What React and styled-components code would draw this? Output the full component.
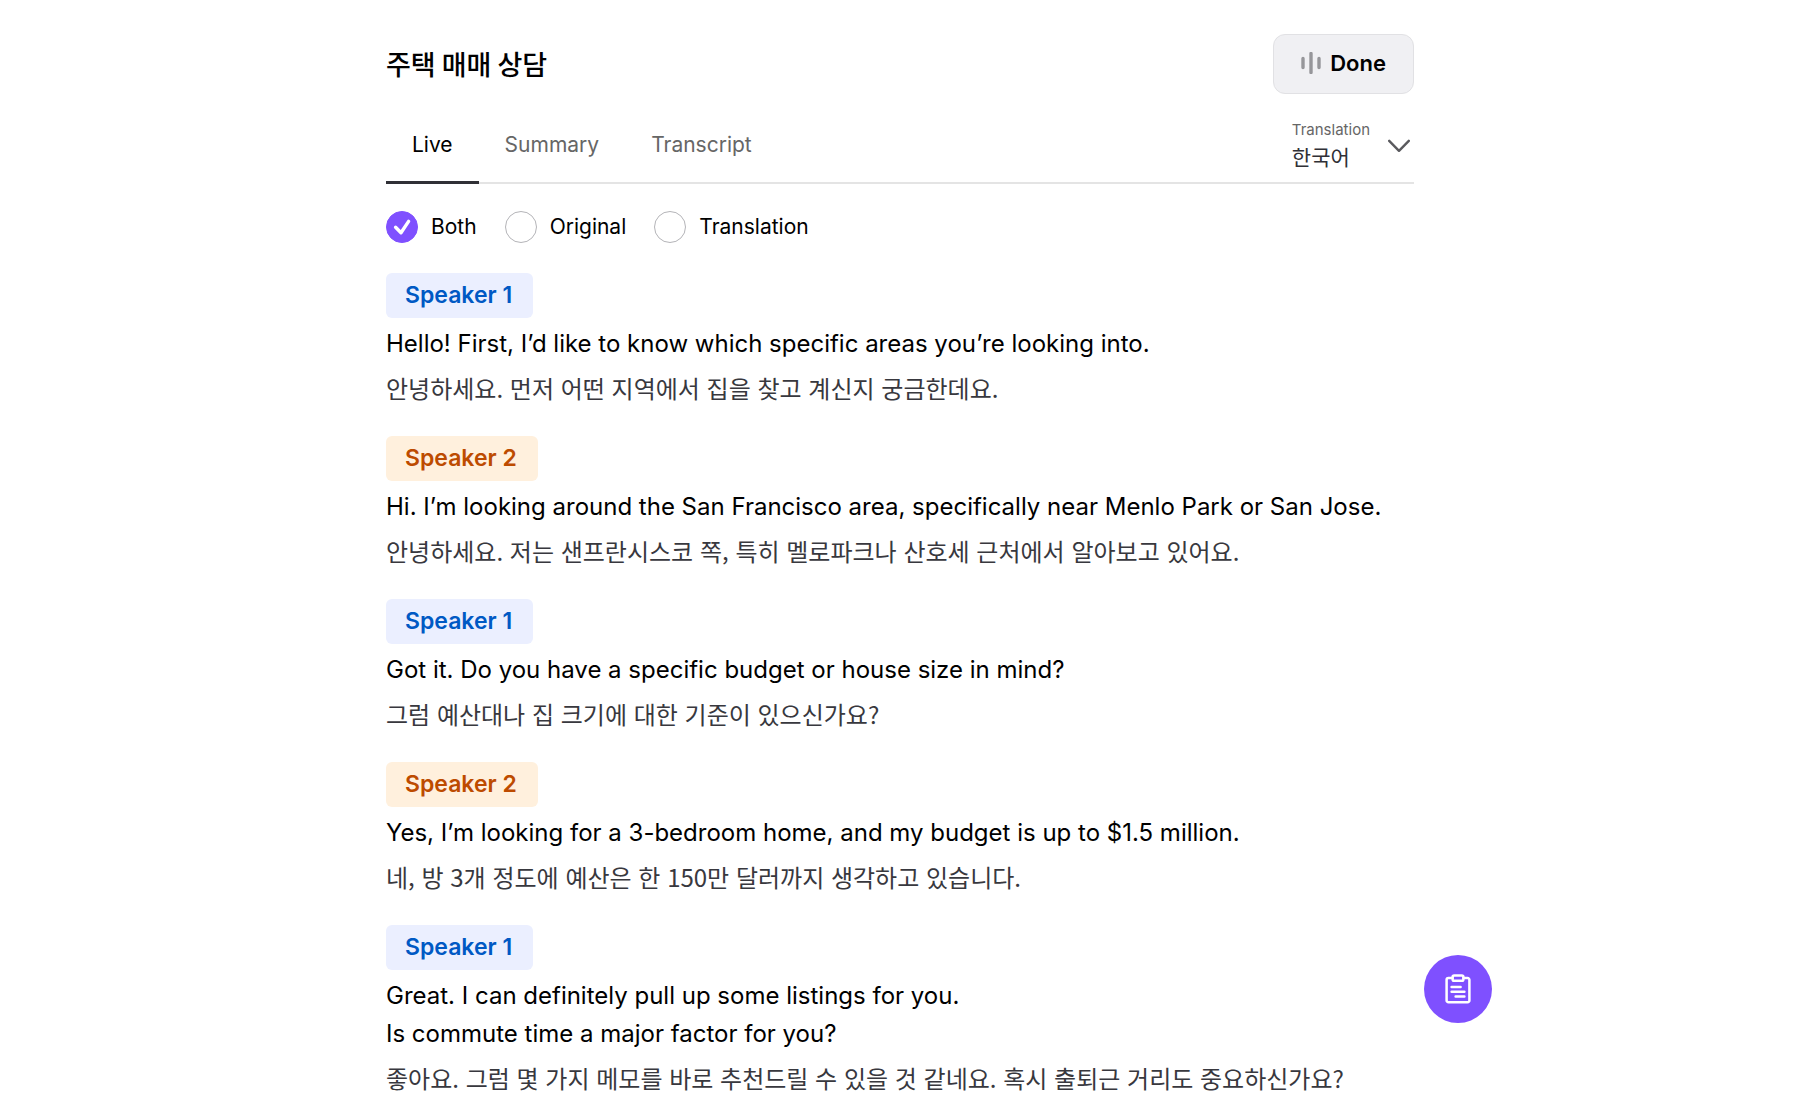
import { useState } from 'react';
import styled, { createGlobalStyle } from 'styled-components';

const PURPLE = '#7f50ff';

const GlobalStyle = createGlobalStyle`
	* {
		box-sizing: border-box;
	}

	body {
		margin: 0;
		background: #fff;
		color: #000;
		font-family: Inter, 'Noto Sans CJK KR', sans-serif;
	}

	button,
	select {
		margin: 0;
		border: 0;
		background: none;
		color: inherit;
		font-family: inherit;
		cursor: pointer;
	}
`;

const SPage = styled.main`
	max-width: 1076px;
	margin: 0 auto;
	padding: 34px 24px 20px;
`;

const SHeader = styled.header`
	display: flex;
	align-items: center;
	justify-content: space-between;
`;

const STitle = styled.h1`
	margin: 0;
	font-family: 'Noto Sans CJK KR', sans-serif;
	font-weight: 500;
	font-size: 27px;
	line-height: 40px;
`;

const SDoneButton = styled.button`
	display: flex;
	align-items: center;
	gap: 9px;
	height: 60px;
	padding: 0 27px 2px;
	border: 1px solid #e1e1e4;
	border-radius: 12px;
	background: #f0f0f3;
	font-weight: 600;
	font-size: 22px;
`;

const SToolbar = styled.div`
	display: flex;
	align-items: stretch;
	justify-content: space-between;
	height: 90px;
	box-shadow: inset 0 -2px #e4e4e4;
`;

const STabs = styled.div`
	display: flex;
`;

const STab = styled.button`
	padding: 14px 26px 0;
	border-bottom: 3px solid ${({ $active }) => ($active ? '#303036' : 'transparent')};
	color: ${({ $active }) => ($active ? '#000' : '#666')};
	font-size: 21px;
	line-height: 24px;
`;

const SLanguage = styled.div`
	display: flex;
	align-items: center;
	gap: 18px;
	padding: 14px 4px 0 0;
`;

const SLanguageField = styled.div`
	display: flex;
	flex-direction: column;
`;

const SLanguageLabel = styled.label`
	color: #666;
	font-size: 15px;
	line-height: 20px;
`;

const SLanguageSelect = styled.select`
	width: 100%;
	height: 32px;
	padding: 0;
	appearance: none;
	color: #303036;
	font-family: 'Noto Sans CJK KR', sans-serif;
	font-size: 21px;
	line-height: 32px;
`;

const SFilters = styled.div`
	display: flex;
	gap: 28px;
	padding: 26px 0 30px;
`;

const SFilter = styled.label`
	display: flex;
	align-items: center;
	gap: 13px;
	font-size: 21px;
	line-height: 33px;
	cursor: pointer;
`;

const SRadioBox = styled.span`
	display: grid;

	> * {
		grid-area: 1 / 1;
	}

	svg {
		pointer-events: none;
	}
`;

const SRadio = styled.input`
	width: 32px;
	height: 32px;
	margin: 0;
	appearance: none;
	border: 1px solid #b4b4b8;
	border-radius: 50%;

	&:checked {
		border-color: ${PURPLE};
		background: ${PURPLE};
	}
`;

const SConversation = styled.section`
	display: flex;
	flex-direction: column;
	gap: 30px;
`;

const SMessage = styled.article`
	display: flex;
	flex-direction: column;
	align-items: flex-start;
	gap: 7px;
`;

const badgeColors = {
	1: { text: '#0059c4', background: '#ebefff' },
	2: { text: '#bd4b00', background: '#fff0dd' },
};

const SBadge = styled.span`
	padding: 0 21px 0 19px;
	border-radius: 6px;
	background: ${({ $speaker }) => badgeColors[$speaker].background};
	color: ${({ $speaker }) => badgeColors[$speaker].text};
	font-weight: 600;
	font-size: 23px;
	line-height: 45px;
`;

const SOriginal = styled.p`
	margin: 0;
	font-size: 24px;
	line-height: 38px;
	white-space: pre-line;
`;

const STranslation = styled.p`
	margin: 0;
	color: #38383e;
	font-family: 'Noto Sans CJK KR', sans-serif;
	font-weight: 400;
	font-size: 24px;
	line-height: 36px;
`;

const SNotesButton = styled.button`
	position: fixed;
	bottom: 97px;
	left: min(calc(50% + 524px), calc(100% - 92px));
	display: flex;
	align-items: center;
	justify-content: center;
	width: 68px;
	height: 68px;
	padding: 0;
	border-radius: 50%;
	background: ${PURPLE};
`;

const WaveIcon = () => (
	<svg width="20" height="22" viewBox="0 0 20 22" fill="none" aria-hidden="true">
		<path
			d="M2 6.5V15.5M10 1.5V20.5M18 6.5V15.5"
			stroke="#96969a"
			strokeWidth="3.4"
			strokeLinecap="round"
		/>
	</svg>
);

const ChevronIcon = () => (
	<svg width="22" height="14" viewBox="0 0 22 14" fill="none" aria-hidden="true">
		<path
			d="M1.2 1.8L11 11.8L20.8 1.8"
			stroke="#5a5a5e"
			strokeWidth="2.4"
			strokeLinecap="round"
			strokeLinejoin="round"
		/>
	</svg>
);

const CheckIcon = () => (
	<svg width="32" height="32" viewBox="0 0 32 32" fill="none" aria-hidden="true">
		<path
			d="M9.6 16.2L15 21.8L22.6 10.4"
			stroke="#fff"
			strokeWidth="3.4"
			strokeLinecap="round"
			strokeLinejoin="round"
		/>
	</svg>
);

const ClipboardIcon = () => (
	<svg width="26" height="30" viewBox="0 0 26 30" fill="none" aria-hidden="true">
		<g stroke="#fff" strokeWidth="2.5" strokeLinecap="round" strokeLinejoin="round">
			<path d="M7.5 4H3.4A1.8 1.8 0 0 0 1.6 5.8V26.4A1.8 1.8 0 0 0 3.4 28.2H22.6A1.8 1.8 0 0 0 24.4 26.4V5.8A1.8 1.8 0 0 0 22.6 4H18.5" />
			<rect x="7.6" y="1.4" width="10.8" height="5.4" rx="1.6" />
			<path d="M6.6 13H15.6M6.6 17.7H19.4M10.6 22.4H19.4" />
		</g>
	</svg>
);

const tabs = ['Live', 'Summary', 'Transcript'];

const filters = ['Both', 'Original', 'Translation'];

const messages = [
	{
		speaker: 1,
		original: 'Hello! First, I’d like to know which specific areas you’re looking into.',
		translation: '안녕하세요. 먼저 어떤 지역에서 집을 찾고 계신지 궁금한데요.',
	},
	{
		speaker: 2,
		original:
			'Hi. I’m looking around the San Francisco area, specifically near Menlo Park or San Jose.',
		translation:
			'안녕하세요. 저는 샌프란시스코 쪽, 특히 멜로파크나 산호세 근처에서 알아보고 있어요.',
	},
	{
		speaker: 1,
		original: 'Got it. Do you have a specific budget or house size in mind?',
		translation: '그럼 예산대나 집 크기에 대한 기준이 있으신가요?',
	},
	{
		speaker: 2,
		original: 'Yes, I’m looking for a 3-bedroom home, and my budget is up to $1.5 million.',
		translation: '네, 방 3개 정도에 예산은 한 150만 달러까지 생각하고 있습니다.',
	},
	{
		speaker: 1,
		original:
			'Great. I can definitely pull up some listings for you.\nIs commute time a major factor for you?',
		translation:
			'좋아요. 그럼 몇 가지 메모를 바로 추천드릴 수 있을 것 같네요. 혹시 출퇴근 거리도 중요하신가요?',
	},
];

const App = () => {
	const [activeTab, setActiveTab] = useState('Live');
	const [filter, setFilter] = useState('Both');

	return (
		<>
			<GlobalStyle />
			<SPage>
				<SHeader>
					<STitle>주택 매매 상담</STitle>
					<SDoneButton type="button">
						<WaveIcon />
						Done
					</SDoneButton>
				</SHeader>
				<SToolbar>
					<STabs role="tablist">
						{tabs.map((tab) => (
							<STab
								key={tab}
								type="button"
								role="tab"
								aria-selected={tab === activeTab}
								$active={tab === activeTab}
								onClick={() => setActiveTab(tab)}
							>
								{tab}
							</STab>
						))}
					</STabs>
					<SLanguage>
						<SLanguageField>
							<SLanguageLabel htmlFor="language">Translation</SLanguageLabel>
							<SLanguageSelect id="language" defaultValue="ko">
								<option value="ko">한국어</option>
							</SLanguageSelect>
						</SLanguageField>
						<ChevronIcon />
					</SLanguage>
				</SToolbar>
				<SFilters role="radiogroup" aria-label="Text shown">
					{filters.map((name) => (
						<SFilter key={name}>
							<SRadioBox>
								<SRadio
									type="radio"
									name="filter"
									value={name}
									checked={name === filter}
									onChange={() => setFilter(name)}
								/>
								{name === filter && <CheckIcon />}
							</SRadioBox>
							{name}
						</SFilter>
					))}
				</SFilters>
				<SConversation>
					{messages.map(({ speaker, original, translation }) => (
						<SMessage key={original}>
							<SBadge $speaker={speaker}>Speaker {speaker}</SBadge>
							{filter !== 'Translation' && <SOriginal>{original}</SOriginal>}
							{filter !== 'Original' && (
								<STranslation lang="ko">{translation}</STranslation>
							)}
						</SMessage>
					))}
				</SConversation>
			</SPage>
			<SNotesButton type="button" aria-label="Notes">
				<ClipboardIcon />
			</SNotesButton>
		</>
	);
};

export default App;
